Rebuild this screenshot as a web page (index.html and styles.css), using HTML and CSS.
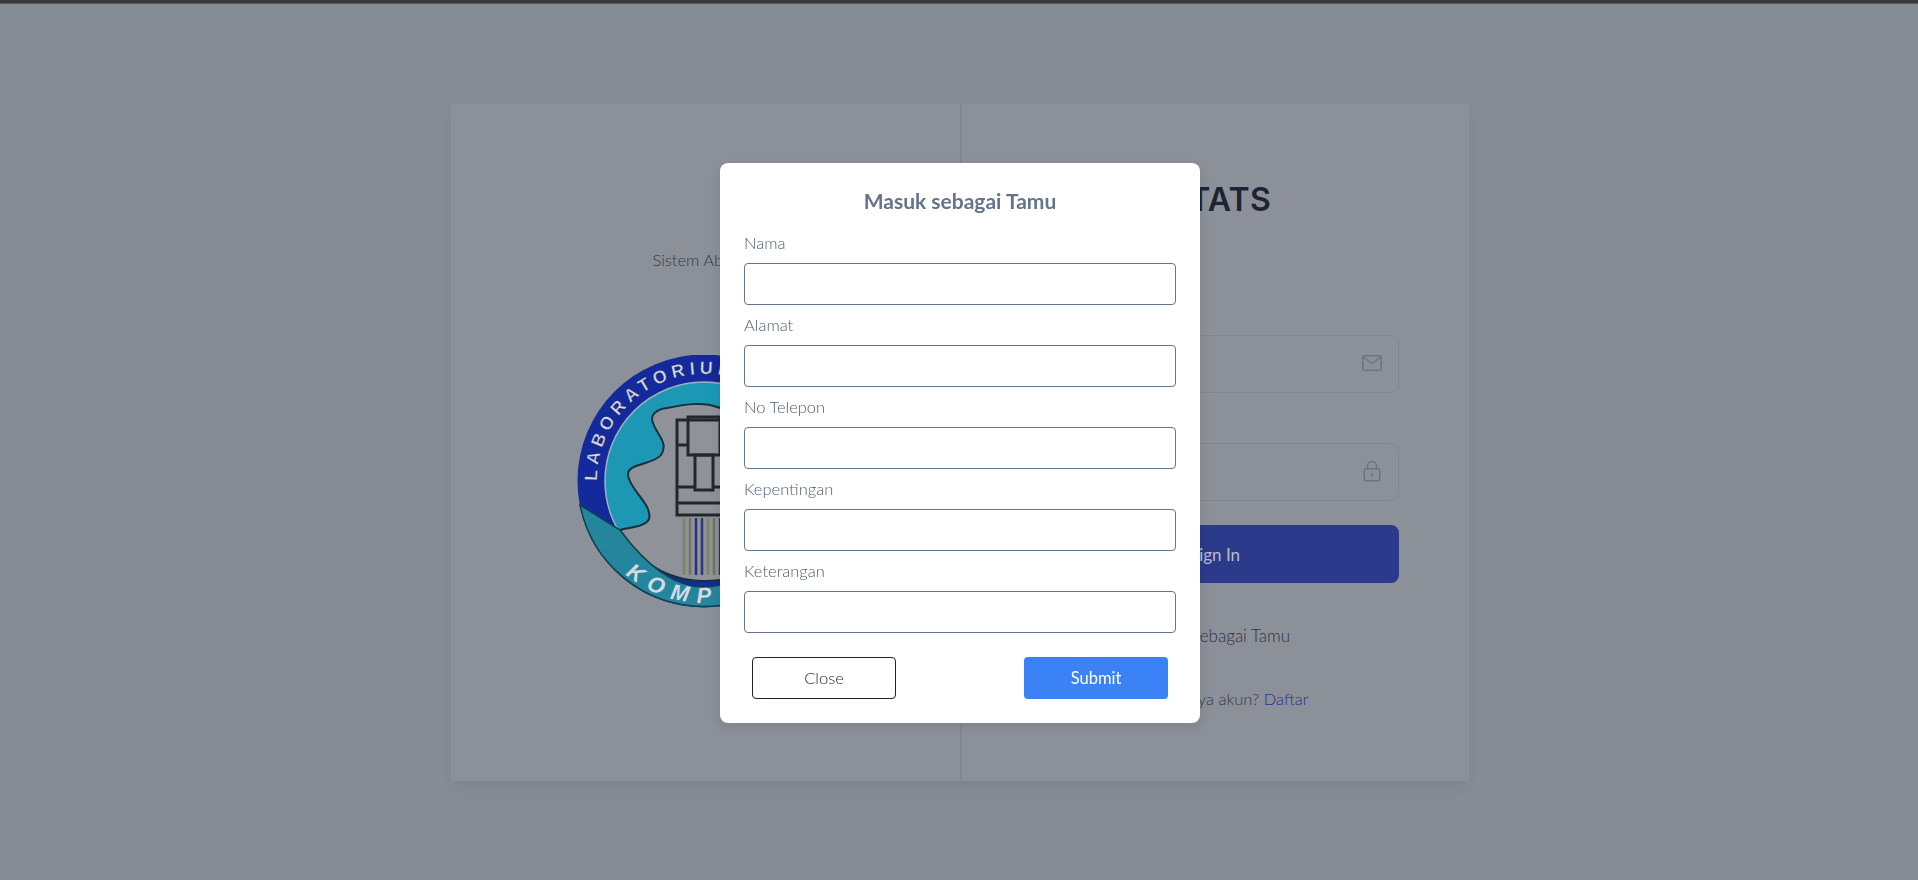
FILE: index.html
```html
<!DOCTYPE html>
<html>
<head>
<meta http-equiv="Content-Type" content="text/html;charset=UTF-8" />
<title>Sign In</title>
<link rel="stylesheet" href="styles.css">
</head>
<body>

<div class="topline"></div>

<div class="card">
    <div class="side">
        <p class="side-text">Sistem Absensi</p>
        <svg class="logo" viewBox="0 0 258 258" width="258" height="258">
            <defs>
                <path id="arc-top" d="M20,126 A107,107 0 0 1 234,126" />
                <path id="arc-bottom" d="M5,126 A122,122 0 0 0 249,126" />
            </defs>
            <circle cx="127" cy="126" r="126.5" fill="#13299c" />
            <circle cx="127" cy="126" r="99" fill="#1c97b4" stroke="#a4b0bb" stroke-width="1.5" />
            <path d="M90,53 C80,54 72,60 76,68 C80,80 92,88 84,100 C76,110 50,108 51,120 C52,134 76,150 72,164 C68,172 54,172 43,175 C56,204 90,226 127,226 C170,226 205,200 216,160 C226,120 214,80 180,56 C160,50 150,56 140,52 C125,46 105,50 90,53 Z" fill="#8f9399" stroke="#15303d" stroke-width="2" />
            <path d="M3,150 A126.5,126.5 0 0 0 251,150 L211,175 Q127,289 43,175 Z" fill="#24869c" stroke="#10404f" stroke-width="1.5" />
            <g fill="none" stroke="#23262d" stroke-width="3">
                <rect x="100" y="65" width="54" height="95" />
                <rect x="111" y="62" width="32" height="38" />
                <rect x="118" y="100" width="18" height="35" />
                <path d="M100,90 H111 M143,90 H154 M100,132 H118 M136,132 H154 M100,148 H154" />
            </g>
            <g fill="none" stroke-width="2.5">
                <path d="M107,163 V220 M131,163 V220" stroke="#7c8462" />
                <path d="M113,163 V220 M137,163 V220" stroke="#6e7560" />
                <path d="M119,163 V220 M143,163 V220" stroke="#26307e" />
                <path d="M125,163 V220" stroke="#2b3a7c" />
            </g>
            <text class="logo-top"><textPath href="#arc-top">LABORATORIUM</textPath></text>
            <text class="logo-bottom"><textPath href="#arc-bottom" startOffset="106">KOMPUTER</textPath></text>
        </svg>
    </div>

    <div class="main">
        <h2 class="heading">SITATS</h2>

        <label class="field-label">Email</label>
        <div class="field">
            <input class="field-input" type="text" />
            <svg class="field-icon" viewBox="0 0 22 22" width="22" height="22" fill="none" stroke="#6f7480" stroke-width="1.5" stroke-linejoin="round">
                <rect x="1.75" y="3.75" width="18.5" height="14.5" rx="1.5" />
                <path d="M2,5 L11,11.5 L20,5" />
            </svg>
        </div>

        <label class="field-label">Password</label>
        <div class="field">
            <input class="field-input" type="password" />
            <svg class="field-icon" viewBox="0 0 22 22" width="22" height="22" fill="none" stroke="#6f7480" stroke-width="1.5" stroke-linecap="round">
                <rect x="3.25" y="8.75" width="15.5" height="12" rx="2.5" />
                <path d="M6.5,8.5 V6 a4.5,4.5 0 0 1 9,0 V8.5" />
                <path d="M11,13.5 V16" />
            </svg>
        </div>

        <button class="signin" type="button">Sign In</button>

        <p class="guest">Masuk sebagai Tamu</p>
        <p class="signup">Belum punya akun? <a class="signup-link">Daftar</a></p>
    </div>
</div>

<div class="backdrop">
    <div class="modal">
        <h3 class="modal-title">Masuk sebagai Tamu</h3>

        <label class="modal-label">Nama</label>
        <input class="modal-input" type="text" />
        <label class="modal-label">Alamat</label>
        <input class="modal-input" type="text" />
        <label class="modal-label">No Telepon</label>
        <input class="modal-input" type="text" />
        <label class="modal-label">Kepentingan</label>
        <input class="modal-input" type="text" />
        <label class="modal-label">Keterangan</label>
        <input class="modal-input" type="text" />

        <div class="modal-actions">
            <button class="btn btn-close" type="button">Close</button>
            <button class="btn btn-submit" type="button">Submit</button>
        </div>
    </div>
</div>

</body>
</html>
```

FILE: styles.css
```css
html,body {
    margin: 0; padding: 0;
    width: 100%; height: 880px; overflow: hidden;
    font-family: "Lato", "Liberation Sans", sans-serif; font-size: 16px;
    background: #858c96;
}
p, h2, h3 { margin: 0; }

.topline { height: 3px; background: #393a3b; border-bottom: 1px solid #5a5c60; }

.card {
    display: flex; width: 1018px; height: 677px;
    margin: 100px 0 0 451px;
    background: #8c9098;
    box-shadow: 0 8px 13px -3px rgba(0,0,0,.07);
}

.side {
    width: 509px; border-right: 2px solid #82868f;
    display: flex; flex-direction: column; align-items: center;
    padding-top: 144px;
}
    .side-text { font-size: 16.5px; line-height: 24px; color: #333a49; margin-bottom: 83px; font-weight: 300; }
    .logo { display: block; }
    .logo-top { font: bold 18px "Liberation Sans", sans-serif; letter-spacing: 4.5px; fill: #d5dae2; stroke: #0b1a60; stroke-width: .4px; }
    .logo-bottom { font: italic bold 22px "Liberation Sans", sans-serif; letter-spacing: 9px; fill: #d5dae2; }

.main {
    flex: 1; padding: 77px 70px 0 69px;
    color: #2c3342;
}
    .heading {
        font-family: "Inter", sans-serif; font-size: 32px; font-weight: 600; line-height: 38px;
        letter-spacing: .3px;
        color: #1c2434; margin-bottom: 82px; text-align: center;
    }
    .field-label { display: block; line-height: 24px; margin-bottom: 10px; font-weight: 500; color: #1c2434; }
    .field { position: relative; margin-bottom: 16px; }
    .field-input {
        display: block; width: 100%; height: 58px; box-sizing: border-box;
        background: transparent; border: 1px solid #82868f; border-radius: 8px;
    }
    .field-icon { position: absolute; right: 16px; top: 17px; }

    .signin {
        display: block; width: 100%; height: 58px; margin-top: 24px;
        background: #2c3a8c; color: #b8bcc6; border: 0; border-radius: 8px;
        font: 400 17px "Lato", sans-serif;
    }
    .guest { text-align: center; font-size: 17px; line-height: 24px; margin-top: 41px; font-weight: 300; }
    .signup { text-align: center; font-size: 16.5px; line-height: 24px; margin-top: 39px; color: #343b4b; font-weight: 300; }
    .signup-link { color: #26328a; }

.backdrop {
    position: fixed; left: 0; top: 0; width: 100%; height: 100%;
    display: flex; justify-content: center; align-items: flex-start;
}

.modal {
    width: 480px; box-sizing: border-box; margin: 163px 0 0 2px;
    padding: 24px; background: #FFF; border-radius: 8px;
    box-shadow: 0 4px 12px rgba(0,0,0,.1);
}
    .modal-title {
        font-size: 21px; font-weight: 700; line-height: 28px; text-align: center;
        color: #64748b; margin-bottom: 16px;
    }
    .modal-label { display: block; font-size: 16.5px; line-height: 24px; margin-bottom: 8px; color: #4d5b72; font-weight: 300; }
    .modal-input {
        display: block; width: 100%; height: 42px; box-sizing: border-box;
        margin-bottom: 8px; background: #FFF;
        border: 1px solid #64748b; border-radius: 4px;
    }
    .modal-actions { display: flex; justify-content: space-between; padding: 16px 8px 0; }

.btn {
    width: 144px; height: 42px; box-sizing: border-box; border-radius: 4px;
    font: 400 16.5px "Lato", sans-serif;
}
.btn-close { background: #FFF; color: #1f2635; border: 1px solid #1c2434; font-weight: 300; }
.btn-submit { background: #3b82f6; color: #FFF; border: 0; }
```
